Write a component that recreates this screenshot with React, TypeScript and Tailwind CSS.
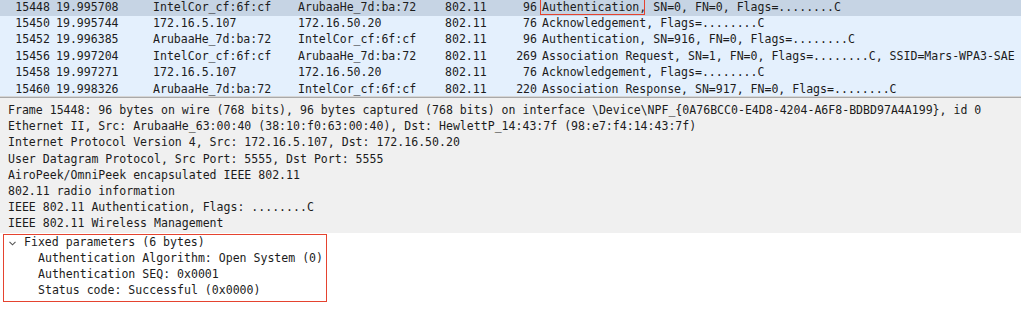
import React from "react";

type Row = {
  no: string;
  time: string;
  src: string;
  dst: string;
  proto: string;
  len: string;
  info: string;
  selected?: boolean;
};

const rows: Row[] = [
  { no: "15448", time: "19.995708", src: "IntelCor_cf:6f:cf", dst: "ArubaaHe_7d:ba:72", proto: "802.11", len: "96", info: "Authentication, SN=0, FN=0, Flags=........C", selected: true },
  { no: "15450", time: "19.995744", src: "172.16.5.107", dst: "172.16.50.20", proto: "802.11", len: "76", info: "Acknowledgement, Flags=........C" },
  { no: "15452", time: "19.996385", src: "ArubaaHe_7d:ba:72", dst: "IntelCor_cf:6f:cf", proto: "802.11", len: "96", info: "Authentication, SN=916, FN=0, Flags=........C" },
  { no: "15456", time: "19.997204", src: "IntelCor_cf:6f:cf", dst: "ArubaaHe_7d:ba:72", proto: "802.11", len: "269", info: "Association Request, SN=1, FN=0, Flags=........C, SSID=Mars-WPA3-SAE" },
  { no: "15458", time: "19.997271", src: "172.16.5.107", dst: "172.16.50.20", proto: "802.11", len: "76", info: "Acknowledgement, Flags=........C" },
  { no: "15460", time: "19.998326", src: "ArubaaHe_7d:ba:72", dst: "IntelCor_cf:6f:cf", proto: "802.11", len: "220", info: "Association Response, SN=917, FN=0, Flags=........C" },
];

const details = [
  "Frame 15448: 96 bytes on wire (768 bits), 96 bytes captured (768 bits) on interface \\Device\\NPF_{0A76BCC0-E4D8-4204-A6F8-BDBD97A4A199}, id 0",
  "Ethernet II, Src: ArubaaHe_63:00:40 (38:10:f0:63:00:40), Dst: HewlettP_14:43:7f (98:e7:f4:14:43:7f)",
  "Internet Protocol Version 4, Src: 172.16.5.107, Dst: 172.16.50.20",
  "User Datagram Protocol, Src Port: 5555, Dst Port: 5555",
  "AiroPeek/OmniPeek encapsulated IEEE 802.11",
  "802.11 radio information",
  "IEEE 802.11 Authentication, Flags: ........C",
  "IEEE 802.11 Wireless Management",
];

const children = [
  "Authentication Algorithm: Open System (0)",
  "Authentication SEQ: 0x0001",
  "Status code: Successful (0x0000)",
];

function InfoText({ info, selected }: { info: string; selected?: boolean }) {
  if (!selected) return <>{info}</>;
  const first = "Authentication,";
  return (
    <>
      <span className="relative">
        {first}
        <span className="absolute left-[-2.5px] right-[1px] top-[-0.5px] bottom-[-1.5px] border border-[#e5432f]" />
      </span>
      {info.slice(first.length)}
    </>
  );
}

export default function App() {
  return (
    <div
      className="w-[1021px] h-[318px] overflow-hidden bg-white text-[#1c1c1c] text-[11.55px] whitespace-pre"
      style={{ fontFamily: '"DejaVu Sans Mono", "Liberation Mono", monospace' }}
    >
      {/* Packet list */}
      <div className="h-[96px] overflow-hidden bg-[#e4f0fd]">
        <div className="-mt-[0.8px]">
          {rows.map((r) => (
            <div
              key={r.no}
              className={`grid grid-cols-[50px_103px_145px_147px_60px_32px_1fr] h-[16.4px] items-center leading-none ${
                r.selected ? "bg-[#c6d4e4]" : ""
              }`}
            >
              <span className="text-right">{r.no}</span>
              <span className="pl-[6px]">{r.time}</span>
              <span>{r.src}</span>
              <span>{r.dst}</span>
              <span>{r.proto}</span>
              <span className="text-right">{r.len}</span>
              <span className="pl-[5px]">
                <InfoText info={r.info} selected={r.selected} />
              </span>
            </div>
          ))}
        </div>
      </div>
      {/* Splitter */}
      <div className="h-[1px] bg-[#d6d6d6]" />
      <div className="h-[1px] bg-[#a9a9a9]" />
      {/* Details */}
      <div className="bg-[#f0f0f0] pt-[5px] h-[135px]">
        {details.map((d) => (
          <div key={d} className="h-[16.1px] flex items-center pl-[8px] leading-none">
            {d}
          </div>
        ))}
      </div>
      <div className="bg-white pl-[3px] pt-[1px]">
        <div className="w-[324px] border border-[#e5432f] pb-[2px]">
          <div className="h-[16px] flex items-center leading-none">
            <svg width="7" height="5" viewBox="0 0 7 5" className="ml-[5px] mr-[8px]">
              <polyline points="0.5,0.8 3.5,3.8 6.5,0.8" fill="none" stroke="#555" strokeWidth="1.1" />
            </svg>
            <span>Fixed parameters (6 bytes)</span>
          </div>
          {children.map((c) => (
            <div key={c} className="h-[15.9px] flex items-center pl-[34px] leading-none">
              {c}
            </div>
          ))}
        </div>
      </div>
    </div>
  );
}
